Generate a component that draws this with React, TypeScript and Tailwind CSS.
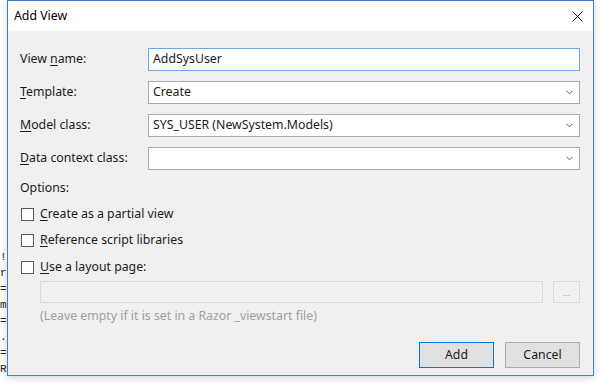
import React from 'react';

const codeLines = ['!', 'r', '=', 'm', '=', '.', '=', 'R'];

const Chevron: React.FC = () => (
    <svg width="7" height="5" viewBox="0 0 7 5" className="shrink-0">
        <path d="M0.5 0.8 L3.5 3.8 L6.5 0.8" fill="none" stroke="#5c5c5c" strokeWidth="1" />
    </svg>
);

const Key: React.FC<{ k: string; rest: string; pre?: string }> = ({ k, rest, pre }) => (
    <span>
        {pre}
        <span className="underline underline-offset-[2px] decoration-[1px]">{k}</span>
        {rest}
    </span>
);

const Combo: React.FC<{ value: string }> = ({ value }) => (
    <div className="flex-1 h-[23px] bg-white border border-[#acacac] flex items-center justify-between pl-[4px] pr-[6px]">
        <span>{value}</span>
        <Chevron />
    </div>
);

const Check: React.FC<{ children: React.ReactNode; className?: string }> = ({ children, className }) => (
    <div className={`h-[19px] flex items-center ${className ?? ''}`}>
        <div className="ml-[1px] w-[13px] h-[13px] bg-white border border-[#5a5a5a] shrink-0" />
        <span className="ml-[6px]">{children}</span>
    </div>
);

export default function App() {
    return (
        <div className="w-[600px] h-[383px] bg-white flex overflow-hidden text-[12.3px] text-[#1a1a1a] font-['Segoe_UI','Noto_Sans',sans-serif]">
            {/* editor text peeking out behind the dialog */}
            <div className="w-[7px] shrink-0 overflow-hidden pt-[249px] font-['Liberation_Mono',monospace] text-[11px] leading-[16px] text-[#222] whitespace-nowrap">
                {codeLines.map((l, i) => (
                    <div key={i}>{l}</div>
                ))}
            </div>

            <div className="w-[587px] h-[376px] shrink-0 border border-[#3b82cc] bg-[#f0f0f0] flex flex-col shadow-[0_2px_8px_rgba(0,0,0,0.18)]">
                {/* Title bar */}
                <div className="h-[30px] bg-white flex items-center justify-between pl-[6px] pr-[10px]">
                    <span className="text-black">Add View</span>
                    <svg width="11" height="11" viewBox="0 0 11 11">
                        <path d="M0.5 0.5 L10.5 10.5 M10.5 0.5 L0.5 10.5" stroke="#111" strokeWidth="1" />
                    </svg>
                </div>

                <div className="flex flex-col pl-[12px] pr-[13px] pt-[17px]">
                    <div className="flex flex-col gap-[10px]">
                        <div className="flex items-center">
                            <div className="w-[128px]"><Key pre="View " k="n" rest="ame:" /></div>
                            <div className="flex-1 h-[23px] bg-white border border-[#6aa8e6] flex items-center pl-[4px]">
                                AddSysUser
                            </div>
                        </div>
                        <div className="flex items-center">
                            <div className="w-[128px]"><Key k="T" rest="emplate:" /></div>
                            <Combo value="Create" />
                        </div>
                        <div className="flex items-center">
                            <div className="w-[128px]"><Key k="M" rest="odel class:" /></div>
                            <Combo value="SYS_USER (NewSystem.Models)" />
                        </div>
                        <div className="flex items-center">
                            <div className="w-[128px]"><Key k="D" rest="ata context class:" /></div>
                            <Combo value="" />
                        </div>
                    </div>

                    <div className="mt-[10px] h-[16px] leading-[16px]">Options:</div>

                    <Check className="mt-[9px]"><Key k="C" rest="reate as a partial view" /></Check>
                    <Check className="mt-[7px]"><Key k="R" rest="eference script libraries" /></Check>
                    <Check className="mt-[8px]"><Key k="U" rest="se a layout page:" /></Check>

                    <div className="mt-[4px] pl-[20px] flex gap-[10px]">
                        <div className="flex-1 h-[22px] border border-[#d9d9d9] bg-[#f0f0f0]" />
                        <div className="w-[27px] h-[22px] border border-[#d9d9d9] bg-[#f0f0f0] flex items-center justify-center text-[9px] text-[#a0a0a0] leading-none">
                            ...
                        </div>
                    </div>

                    <div className="mt-[5px] pl-[20px] h-[16px] leading-[16px] text-[#a0a0a0]">
                        (Leave empty if it is set in a Razor _viewstart file)
                    </div>

                    <div className="mt-[18px] flex justify-end gap-[11px]">
                        <div className="w-[75px] h-[26px] bg-[#e1e1e1] border border-[#0078d7] flex items-center justify-center">
                            Add
                        </div>
                        <div className="w-[75px] h-[26px] bg-[#e1e1e1] border border-[#adadad] flex items-center justify-center">
                            Cancel
                        </div>
                    </div>
                </div>
            </div>
        </div>
    );
}
